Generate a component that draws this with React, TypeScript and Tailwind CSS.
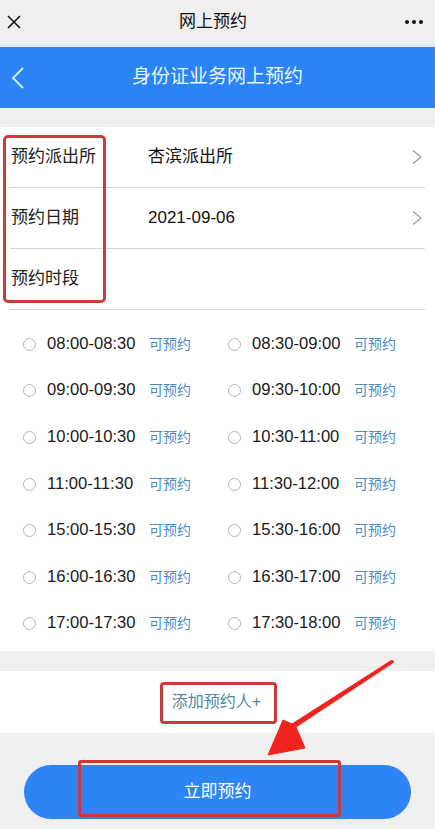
import React from "react";

const slots = [
  ["08:00-08:30", "08:30-09:00"],
  ["09:00-09:30", "09:30-10:00"],
  ["10:00-10:30", "10:30-11:00"],
  ["11:00-11:30", "11:30-12:00"],
  ["15:00-15:30", "15:30-16:00"],
  ["16:00-16:30", "16:30-17:00"],
  ["17:00-17:30", "17:30-18:00"],
];

function Chevron() {
  return (
    <svg width="12" height="16" viewBox="0 0 12 16" className="text-[#9a9a9a]">
      <path d="M2 1.5 L10 8 L2 14.5" fill="none" stroke="currentColor" strokeWidth="1.2" />
    </svg>
  );
}

function Slot({ time }: { time: string }) {
  return (
    <div className="flex items-center">
      <span className="w-[13px] h-[13px] rounded-full border border-[#b5b5b5] bg-white shrink-0" />
      <span className="ml-[11px] w-[102px] text-[16.6px] text-[#1a1a1a]">{time}</span>
      <span className="text-[14px] text-[#4a8cc4]">可预约</span>
    </div>
  );
}

export default function App() {
  return (
    <div
      className="relative w-[435px] h-[829px] bg-[#efefef] overflow-hidden"
      style={{ fontFamily: '"Liberation Sans", "Noto Sans CJK SC", sans-serif' }}
    >
      {/* wechat top bar */}
      <div className="h-[43px] flex items-center justify-between pl-[7px] pr-[12px]">
        <svg width="14" height="14" viewBox="0 0 14 14">
          <path d="M1 1 L13 13 M13 1 L1 13" stroke="#111" strokeWidth="1.6" />
        </svg>
        <span className="text-[17px] text-[#111]">网上预约</span>
        <span className="flex gap-[3px]">
          <span className="w-[4px] h-[4px] rounded-full bg-[#111]" />
          <span className="w-[4px] h-[4px] rounded-full bg-[#111]" />
          <span className="w-[4px] h-[4px] rounded-full bg-[#111]" />
        </span>
      </div>
      <div className="h-[4px] bg-[#dbe8f5]" />

      {/* blue header */}
      <div className="h-[61px] bg-[#2b83f6] flex items-center relative">
        <svg width="14" height="24" viewBox="0 0 14 24" className="ml-[11px]">
          <path d="M12 2 L2 12 L12 22" fill="none" stroke="#cdeeff" strokeWidth="2" />
        </svg>
        <span className="absolute inset-x-0 text-center text-[19px] text-[#e6f7ff]">身份证业务网上预约</span>
      </div>
      <div className="h-[19px]" />

      {/* form */}
      <div className="bg-white">
        <div className="mx-[10px] h-[61px] flex items-center border-b border-[#d6d6d6]">
          <span className="w-[138px] pl-px text-[17px] text-[#222]">预约派出所</span>
          <span className="flex-1 text-[17px] text-[#111]">杏滨派出所</span>
          <span className="mr-[2px]"><Chevron /></span>
        </div>
        <div className="mx-[10px] h-[61px] flex items-center border-b border-[#d6d6d6]">
          <span className="w-[138px] pl-px text-[17px] text-[#222]">预约日期</span>
          <span className="flex-1 text-[17px] text-[#111]">2021-09-06</span>
          <span className="mr-[2px]"><Chevron /></span>
        </div>
        <div className="mx-[10px] h-[61px] flex items-center border-b border-[#d6d6d6]">
          <span className="pl-px text-[17px] text-[#222]">预约时段</span>
        </div>
        <div className="pt-[11px] pb-[4px]">
          {slots.map((row, i) => (
            <div key={i} className="h-[46.6px] grid grid-cols-[205px_1fr] pl-[23px]">
              <Slot time={row[0]} />
              <Slot time={row[1]} />
            </div>
          ))}
        </div>
      </div>
      <div className="h-[20px]" />

      <div className="bg-white h-[62px] flex items-center justify-center">
        <span className="text-[16px] text-[#4f8a9e] pr-[2px]">添加预约人+</span>
      </div>

      <div className="pt-[32px] px-[24px]">
        <button className="w-full h-[54px] rounded-full bg-[#2d85f5] text-white text-[17px]">立即预约</button>
      </div>

      {/* annotations */}
      <div className="absolute left-[3px] top-[135px] w-[103px] h-[168px] border-[3px] border-[#d23a3a] rounded-[5px]" />
      <div className="absolute left-[160px] top-[682px] w-[117px] h-[42px] border-[3px] border-[#c93a3a] rounded-[4px]" />
      <div className="absolute left-[78px] top-[760px] w-[263px] h-[57px] border-[3px] border-[#c93a3a] rounded-[3px]" />
      <svg className="absolute left-0 top-0" width="435" height="829" viewBox="0 0 435 829">
        <path
          d="M394 662 L296 727 L305 748 L268 755 L283 720 L292 724 L392 660 Z"
          fill="#f0241f"
          stroke="#f0241f"
          strokeWidth="1"
          strokeLinejoin="round"
        />
      </svg>
    </div>
  );
}
